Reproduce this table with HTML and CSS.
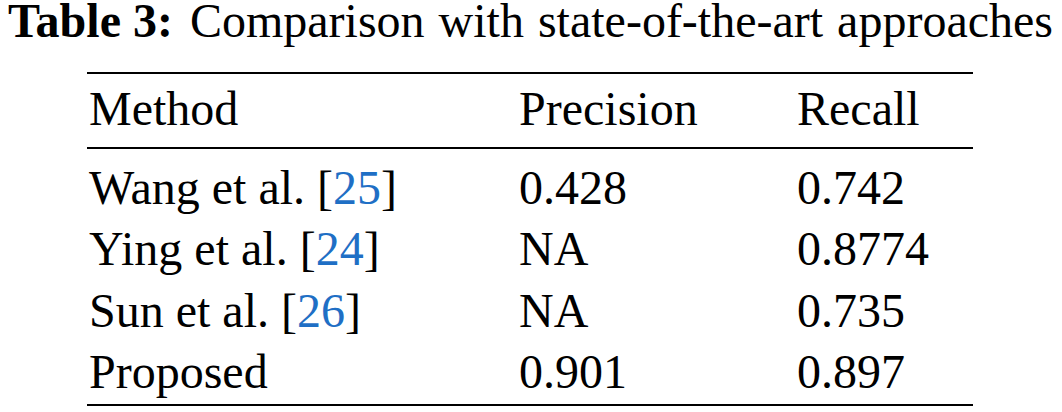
FILE: index.html
```html
<!DOCTYPE html>
<html lang="en">
<head>
    <meta charset="UTF-8">
    <title>Table 3</title>
    <link rel="stylesheet" href="styles.css">
</head>
<body>
    <p class="caption"><b class="label">Table 3:</b>Comparison with state-of-the-art approaches</p>

    <table class="results">
        <thead>
            <tr>
                <th class="col-method">Method</th>
                <th class="col-precision">Precision</th>
                <th class="col-recall">Recall</th>
            </tr>
        </thead>
        <tbody>
            <tr>
                <td>Wang et al. [<a href="#ref25" class="cite">25</a>]</td>
                <td>0.428</td>
                <td>0.742</td>
            </tr>
            <tr>
                <td>Ying et al. [<a href="#ref24" class="cite">24</a>]</td>
                <td>NA</td>
                <td>0.8774</td>
            </tr>
            <tr>
                <td>Sun et al. [<a href="#ref26" class="cite">26</a>]</td>
                <td>NA</td>
                <td>0.735</td>
            </tr>
            <tr>
                <td>Proposed</td>
                <td>0.901</td>
                <td>0.897</td>
            </tr>
        </tbody>
    </table>
</body>
</html>
```

FILE: styles.css
```css
body {
    margin: 0;
    background: #fff;
    color: #000;
    font-family: "Liberation Serif", serif;
    font-size: 48px;
}

.caption {
    margin: 0;
    padding: 1px 0 0 8px;
    line-height: 40px;
    word-spacing: 2px;
    white-space: nowrap;
}

.label {
    margin-right: 17px;
    word-spacing: 0;
}

.results {
    margin: 31px 0 0 87px;
    width: 886px;
    border-collapse: collapse;
    border-top: 2px solid #000;
    border-bottom: 2px solid #000;
}

.results th,
.results td {
    padding: 0 0 0 2px;
    text-align: left;
    font-weight: normal;
    line-height: 61.5px;
    white-space: nowrap;
}

.results thead th {
    padding-top: 4px;
    padding-bottom: 7px;
    border-bottom: 2px solid #000;
}

.results tbody tr:first-child td {
    padding-top: 8px;
}

.results tbody tr:last-child td {
    padding-bottom: 1px;
}

.col-method {
    width: 428px;
}

.col-precision {
    width: 276px;
}

.cite {
    color: #1f6fc5;
    text-decoration: none;
}
```
